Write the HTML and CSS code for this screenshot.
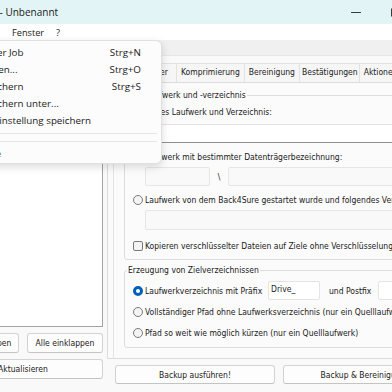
FILE: index.html
```html
<!DOCTYPE html>
<html lang="de">
<head>
<meta charset="utf-8">
<title>Back4Sure - Unbenannt</title>
<link rel="stylesheet" href="styles.css">
</head>
<body>
<div class="window">
  <div class="titlebar">
    <span class="title"><span class="appname">Back4Sure</span> - Unbenannt</span>
    <div class="caption">
      <span class="cap cap-min"><i></i></span>
      <span class="cap cap-max"><i></i></span>
      <span class="cap cap-close">✕</span>
    </div>
  </div>
  <div class="menubar">
    <span class="mitem mitem-open">Datei</span>
    <span class="mitem">Fenster</span>
    <span class="mitem">?</span>
  </div>
  <div class="toolbar"></div>
  <div class="main">
    <div class="left">
      <div class="tree"></div>
      <div class="btnrow">
        <button class="btn">Alle ausklappen</button>
        <button class="btn">Alle einklappen</button>
      </div>
      <button class="btn btn-wide">Aktualisieren</button>
    </div>
    <div class="splitter"></div>
    <div class="right">
      <div class="tabs">
        <span class="tab tab-sel">Quelle</span>
        <span class="tab">Filter</span>
        <span class="tab">Komprimierung</span>
        <span class="tab">Bereinigung</span>
        <span class="tab">Bestätigungen</span>
        <span class="tab">Aktionen</span>
        <span class="tab">Zeitplan</span>
      </div>
      <div class="page">
        <div class="scroll">
          <fieldset class="group g1">
            <legend>Quelllaufwerk und -verzeichnis</legend>
            <div class="opt o1"><span class="radio on"></span><span>Festes Laufwerk und Verzeichnis:</span></div>
            <div class="field f1"></div>
            <div class="opt o2"><span class="radio"></span><span>Laufwerk mit bestimmter Datenträgerbezeichnung:</span></div>
            <div class="drv">
              <div class="field dis f-short"></div>
              <span class="bs">\</span>
              <div class="field dis f-long"></div>
            </div>
            <div class="opt o3"><span class="radio"></span><span>Laufwerk von dem Back4Sure gestartet wurde und folgendes Verzeichnis:</span></div>
            <div class="field dis f3"></div>
            <div class="opt o4"><span class="check"></span><span>Kopieren verschlüsselter Dateien auf Ziele ohne Verschlüsselung</span></div>
          </fieldset>
          <fieldset class="group g2">
            <legend>Erzeugung von Zielverzeichnissen</legend>
            <div class="opt p1">
              <span class="radio on"></span><span class="plabel">Laufwerkverzeichnis mit Präfix</span>
              <div class="field drive">Drive_</div>
              <span class="postlabel">und Postfix</span>
              <div class="field post"></div>
            </div>
            <div class="opt p2"><span class="radio"></span><span>Vollständiger Pfad ohne Laufwerksverzeichnis (nur ein Quelllaufwerk)</span></div>
            <div class="opt p3"><span class="radio"></span><span>Pfad so weit wie möglich kürzen (nur ein Quelllaufwerk)</span></div>
          </fieldset>
        </div>
      </div>
      <div class="actions">
        <button class="btn">Backup ausführen!</button>
        <button class="btn">Backup &amp; Bereinigung</button>
      </div>
    </div>
  </div>
  <div class="dropdown">
    <div class="dd-item"><span>Neuer Job</span><span>Strg+N</span></div>
    <div class="dd-item"><span>Öffnen...</span><span>Strg+O</span></div>
    <div class="dd-item"><span>Speichern</span><span>Strg+S</span></div>
    <div class="dd-item"><span>Speichern unter...</span><span></span></div>
    <div class="dd-item"><span>Voreinstellung speichern</span><span></span></div>
    <div class="dd-sep"></div>
    <div class="dd-sep"></div>
    <div class="dd-item"><span>Ende</span><span></span></div>
  </div>
</div>
</body>
</html>
```

FILE: styles.css
```css
* { box-sizing: border-box; }
html, body {
  margin: 0;
  padding: 0;
  width: 392px;
  height: 392px;
  overflow: hidden;
  background: #f9f9f9;
}
body {
  font-family: "DejaVu Sans Condensed", "DejaVu Sans", sans-serif;
  font-stretch: condensed;
  font-size: 8.5px;
  color: #1a1a1a;
}
.window {
  position: relative;
  width: 500px;
  height: 392px;
  margin-left: -57px;
  display: flex;
  flex-direction: column;
}
.titlebar {
  height: 24px;
  flex: none;
  background: #e3f4f6;
  display: flex;
  align-items: center;
  font-family: "Open Sans", sans-serif;
  font-stretch: normal;
  font-size: 10px;
}
.title { flex: 1; white-space: pre; }
.appname {
  display: inline-block;
  width: 54px;
  text-align: right;
  overflow: hidden;
  vertical-align: bottom;
}
.caption { display: flex; height: 24px; }
.cap { width: 35px; display: flex; align-items: center; justify-content: center; }
.cap-min i { display: block; width: 10px; height: 1px; background: #3a3a3a; }
.cap-max i { display: block; width: 9px; height: 9px; border: 1px solid #3a3a3a; border-radius: 1px; margin-left: 10px; }
.cap-close { font-size: 10px; }

.menubar {
  height: 16px;
  flex: none;
  background: #ffffff;
  display: flex;
  align-items: center;
  padding-left: 10px;
  font-family: "Open Sans", sans-serif;
  font-stretch: normal;
  font-size: 9.2px;
}
.mitem { padding: 0 6px; white-space: nowrap; }
.mitem-open { width: 53px; }
.toolbar {
  height: 16px;
  flex: none;
  background: #f0f0f0;
  border-bottom: 1px solid #e6e6e6;
}
.main {
  flex: 1;
  display: flex;
  min-height: 0;
}
.left {
  width: 160px;
  flex: none;
  display: flex;
  flex-direction: column;
  padding: 4px 0 13px;
}
.tree {
  flex: 1;
  background: #ffffff;
  border: 1px solid #a3a3a3;
}
.btnrow { display: flex; gap: 8px; margin-top: 6px; }
.btnrow .btn { flex: 1; }
.btn-wide { margin-top: 6px; width: 100%; }
.btn {
  font: inherit;
  height: 20px;
  padding: 0;
  background: #fdfdfd;
  border: 1px solid #d3d3d3;
  border-bottom-color: #c4c4c4;
  border-radius: 3px;
  color: #1a1a1a;
  white-space: nowrap;
}
.splitter { width: 4px; flex: none; }
.right {
  width: 336px;
  flex: none;
  display: flex;
  flex-direction: column;
  padding: 6px 0 8px;
}
.tabs {
  height: 20px;
  flex: none;
  display: flex;
  align-items: flex-end;
  padding-left: 2px;
}
.tab {
  flex: none;
  height: 19px;
  line-height: 17px;
  padding: 0 4px;
  border: 1px solid #e2e2e2;
  border-left: none;
  border-bottom: none;
  background: #f6f6f6;
  white-space: nowrap;
}
.tab-sel {
  height: 21px;
  line-height: 19px;
  border-left: 1px solid #dcdcdc;
  background: #fbfbfb;
  margin-bottom: -1px;
  position: relative;
  width: 36px;
}
.tabs .tab:nth-child(2) { width: 32px; }
.tabs .tab:nth-child(5) { padding: 0 1px 0 2px; }
.page {
  flex: 1;
  min-height: 0;
  border: 1px solid #dcdcdc;
  background: #fbfbfb;
  padding: 7px 0 0 5px;
  display: flex;
  overflow: hidden;
}
.scroll {
  flex: 1;
  border-left: 1px solid #e3e3e3;
  padding: 0 8px 0 10px;
}
.group {
  margin: 0;
  border: 1px solid #dcdcdc;
  border-radius: 3px;
  padding: 0 8px 6px 8px;
  min-width: 0;
}
.group legend {
  padding: 0 1px;
  margin-left: -6px;
  height: 11px;
  line-height: 11px;
  white-space: nowrap;
}
.g2 { margin-top: 5px; padding-bottom: 7px; }
.opt {
  display: flex;
  align-items: center;
  gap: 2px;
  height: 14px;
  white-space: nowrap;
}
.radio {
  flex: none;
  width: 10px;
  height: 10px;
  border: 1px solid #7a7a7a;
  border-radius: 50%;
  background: #f4f4f4;
}
.radio.on {
  border: 3px solid #005fb8;
  background: #ffffff;
}
.check {
  flex: none;
  width: 10px;
  height: 10px;
  border: 1px solid #7a7a7a;
  border-radius: 2px;
  background: #f4f4f4;
}
.field {
  height: 19px;
  background: #ffffff;
  border: 1px solid #e4e4e4;
  border-bottom-color: #8e8e8e;
  border-radius: 2px;
}
.field.dis {
  background: #f9f9f9;
  border-color: #e6e6e6;
}
.o1 { margin-top: 4px; }
.f1 { margin: 5px 0 0 12px; }
.o2 { margin-top: 7px; }
.drv {
  display: flex;
  align-items: center;
  height: 19px;
  margin: 3px 0 0 12px;
}
.f-short { width: 65px; }
.bs { width: 18px; text-align: center; }
.f-long { flex: 1; }
.o3 { margin-top: 7px; }
.f3 { margin: 3px 0 0 12px; height: 20px; }
.o4 { margin-top: 9px; }
.p1 { height: 19px; margin-top: 5px; }
.plabel { width: 119px; }
.drive {
  width: 52px;
  margin-left: 2px;
  padding: 1px 0 0 2px;
  line-height: 13px;
  border-bottom-color: #e4e4e4;
}
.postlabel { width: 47px; margin-left: 7px; }
.post { flex: 1; margin-left: 0; border-bottom-color: #e4e4e4; }
.p2 { margin-top: 5px; }
.p3 { margin-top: 7px; }
.actions {
  display: flex;
  gap: 8px;
  margin-top: 6px;
  padding-left: 8px;
  height: 19px;
  flex: none;
}
.actions .btn { width: 160px; height: 19px; }

.dropdown {
  position: absolute;
  left: 7px;
  top: 40px;
  width: 212px;
  z-index: 10;
  background: #fcfcfc;
  border: 1px solid #e0e0e0;
  border-radius: 6px;
  box-shadow: 0 3px 8px rgba(0, 0, 0, 0.14);
  padding: 3px 0 1px;
  font-family: "Open Sans", sans-serif;
  font-stretch: normal;
  font-size: 9.8px;
}
.dd-item {
  height: 17px;
  display: flex;
  align-items: center;
  justify-content: space-between;
  padding: 0 20px 0 27px;
  white-space: nowrap;
}
.dd-sep {
  height: 8px;
  display: flex;
  align-items: center;
  padding: 0 4px;
}
.dd-sep::before {
  content: "";
  flex: 1;
  height: 1px;
  background: #e6e6e6;
}
```
